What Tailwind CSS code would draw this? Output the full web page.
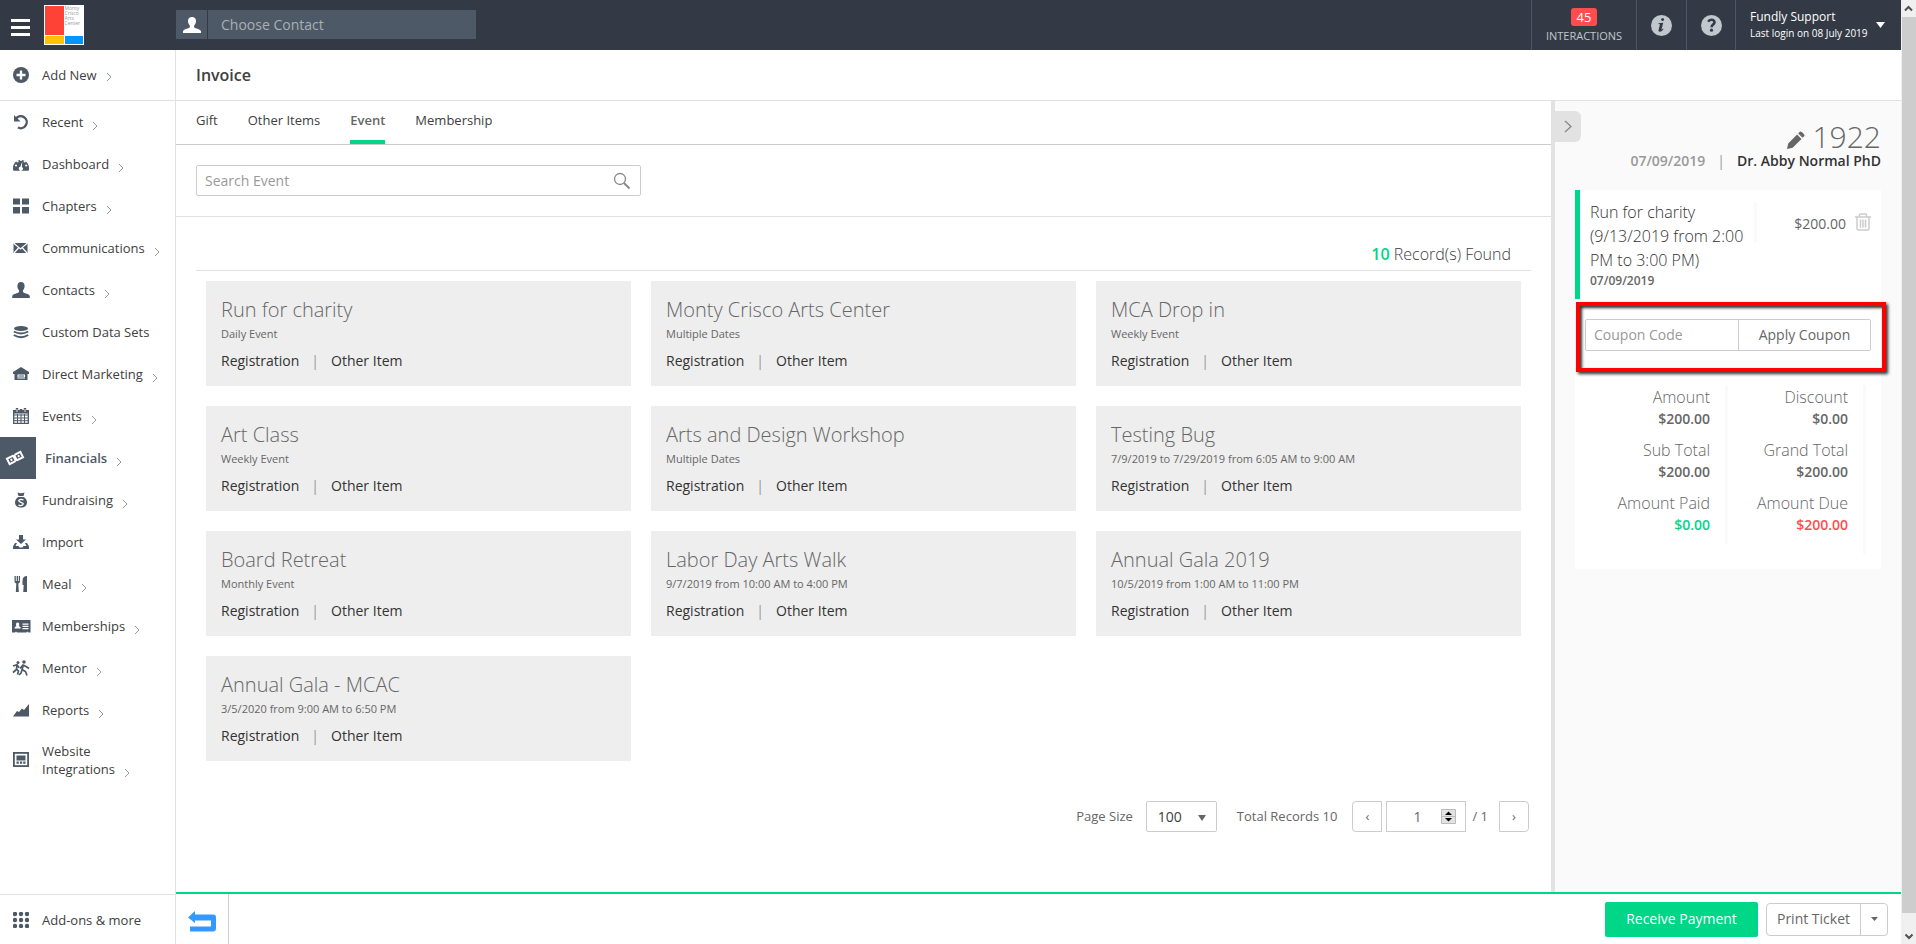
<!DOCTYPE html>
<html lang="en">
<head>
<meta charset="utf-8">
<meta name="viewport" content="width=device-width, initial-scale=1">
<title>Invoice</title>
<script src="https://cdn.jsdelivr.net/npm/@tailwindcss/browser@4"></script>
</head>
<body class="flex h-screen flex-col overflow-hidden bg-white font-['Open_Sans',sans-serif] text-sm text-[#666]">
<div class="flex min-h-0 flex-1">
<div class="flex min-w-0 flex-1 flex-col">

<header class="flex h-[50px] shrink-0 bg-[#343a45] text-white">
  <div class="flex w-44 shrink-0 items-center gap-[14px] pl-[11px]">
    <button aria-label="Menu" class="flex flex-col gap-1 pt-1"><span class="h-[3px] w-[19px] bg-white"></span><span class="h-[3px] w-[19px] bg-white"></span><span class="h-[3px] w-[19px] bg-white"></span></button>
    <a href="#" aria-label="Monty Crisco Arts Center" class="grid size-10 grid-cols-2 gap-px bg-white p-px">
      <span class="bg-[#ff4136]"></span>
      <span class="overflow-hidden text-[5px] leading-[5px] text-[#999]">Monty<br>Crisco<br>Arts<br>Center</span>
      <span class="bg-[#ffc107]"></span>
      <span class="bg-[#0095ff]"></span>
    </a>
  </div>
  <div class="flex h-[29px] w-[300px] gap-px self-center -mt-px">
    <span class="flex w-[31px] items-center justify-center bg-[#4d5966]"><svg class="size-[18px]" viewBox="0 0 18 18" fill="#fff"><path d="M9 1c2.500 0 4 1.600 4 4 0 1.600-.6 3.200-1.600 4.200-.5.600-.5 1.500 0 2.200.7.900 5.600 1.500 6.600 3.600V17H0v-2c1-2.100 5.900-2.700 6.600-3.600.5-.7.500-1.600 0-2.200C5.600 8.200 5 6.600 5 5c0-2.400 1.500-4 4-4z"/></svg></span>
    <input aria-label="Choose Contact" placeholder="Choose Contact" class="min-w-0 flex-1 bg-[#4d5966] px-[13px] text-sm outline-none placeholder:text-[#a9afb5]">
  </div>
  <div class="ml-auto flex">
    <a href="#" class="flex w-[105px] flex-col items-center border-l border-[#4d5663] pt-2 text-xs text-[#c2c7cd]"><span class="h-[18px] rounded-[3px] bg-[#ff4d4d] px-[6px] text-[13px] leading-[18px] text-white">45</span><span class="mt-px text-[11px] leading-[18px]">INTERACTIONS</span></a>
    <button aria-label="Information" class="flex w-[50px] items-center justify-center border-l border-[#4d5663]"><svg class="size-[21px]" viewBox="0 0 21 21"><circle cx="10.500" cy="10.500" r="10.500" fill="#c2c7cd"/><path fill="#343a45" d="M10.300 3.800a1.500 1.500 0 1 1 2.600 1.500 1.500 1.500 0 0 1-2.600-1.500zM7.500 8.300l4.700-.5-1.700 6.600c-.1.500.4.500 1.500-.8l.5.400c-1.200 1.900-2.300 2.700-3.500 2.700-1.300 0-1.700-.8-1.400-2l1.300-5c.1-.5-.3-.6-1.500-.7z"/></svg></button>
    <button aria-label="Help" class="flex w-[49px] items-center justify-center border-l border-[#4d5663]"><svg class="size-[21px]" viewBox="0 0 21 21"><circle cx="10.500" cy="10.500" r="10.500" fill="#c2c7cd"/><path fill="none" stroke="#343a45" stroke-width="2.600" d="M7.200 6.800c.6-1.300 1.700-2 3.300-2 1.800 0 3 .9 3 2.500 0 2.300-2.900 2.300-2.900 4.900"/><circle cx="10.500" cy="15.200" r="1.600" fill="#343a45"/></svg></button>
    <button class="flex w-[166px] items-center gap-2 border-l border-[#4d5663] pl-[14px] text-left"><span class="whitespace-nowrap"><span class="block text-xs leading-4">Fundly Support</span><span class="block text-[10px] leading-4">Last login on 08 July 2019</span></span><svg class="h-[6px] w-[9px]" viewBox="0 0 9 6" fill="#fff"><path d="M0 0h9L4.500 6z"/></svg></button>
  </div>
</header>

<div class="flex min-h-0 flex-1">
<nav class="flex w-44 shrink-0 flex-col border-r border-[#e2e2e2] text-[13px] leading-[18px] text-[#404040]">
  <a href="#" class="flex h-[51px] items-center border-b border-[#e2e2e2] pl-[13px]"><svg class="size-4 w-4" viewBox="0 0 16 16"><circle cx="8" cy="8" r="8" fill="#4d5966"/><path d="M8 3.500v9M3.500 8h9" stroke="#fff" stroke-width="2.400"/></svg><span class="ml-[13px]">Add New</span><svg class="ml-[9px] mt-1 h-2 w-[6px]" viewBox="0 0 6 8"><path d="M1 0l4 4-4 4" fill="none" stroke="#999"/></svg></a>
  <div id="menu" class="flex flex-1 flex-col"></div>
  <a href="#" class="flex h-[50px] items-center border-t border-[#e2e2e2] pl-[13px]"><svg class="size-4" viewBox="0 0 16 16" fill="#4d5966"><circle cx="2" cy="2" r="2.200"/><circle cx="8" cy="2" r="2.200"/><circle cx="14" cy="2" r="2.200"/><circle cx="2" cy="8" r="2.200"/><circle cx="8" cy="8" r="2.200"/><circle cx="14" cy="8" r="2.200"/><circle cx="2" cy="14" r="2.200"/><circle cx="8" cy="14" r="2.200"/><circle cx="14" cy="14" r="2.200"/></svg><span class="ml-[13px]">Add-ons &amp; more</span></a>
</nav>

<div class="flex min-w-0 flex-1 flex-col">
  <h1 class="flex h-[51px] shrink-0 items-center border-b border-[#e2e2e2] px-5 text-base font-semibold text-[#404040]">Invoice</h1>
  <div class="flex min-h-0 flex-1">
    <main class="flex min-w-0 flex-1 flex-col">
      <div class="flex h-11 shrink-0 gap-[30px] border-b border-[#ccc] px-5 text-[13px] text-[#404040]">
        <a href="#" class="flex h-[43px] items-center border-b-4 border-transparent">Gift</a>
        <a href="#" class="flex h-[43px] items-center border-b-4 border-transparent">Other Items</a>
        <a href="#" aria-current="page" class="flex h-[43px] items-center border-b-4 border-[#00d688] font-semibold text-[#666]">Event</a>
        <a href="#" class="flex h-[43px] items-center border-b-4 border-transparent">Membership</a>
      </div>
      <div class="flex h-[72px] shrink-0 border-b border-[#e2e2e2] px-5 pt-5">
        <label class="flex h-[31px] w-[445px] items-center rounded-xs border border-[#ccc] px-2"><input aria-label="Search Event" placeholder="Search Event" class="min-w-0 flex-1 text-sm outline-none placeholder:text-[#999]"><svg class="mr-px size-[18px]" viewBox="0 0 18 18" fill="none" stroke="#888"><circle cx="7" cy="7" r="5.500" stroke-width="1.300"/><path d="M11 11l5.500 5.500" stroke-width="2"/></svg></label>
      </div>
      <div class="flex flex-1 flex-col px-5">
        <p class="flex h-[54px] items-end justify-end border-b border-[#e2e2e2] pr-5 pb-[5px] text-base leading-[22px] font-light text-[#404040]"><span><b class="font-semibold text-[#00d688]">10</b> Record(s) Found</span></p>
        <div id="cards" class="grid grid-cols-3 gap-5 p-[10px]"></div>
        <div class="mt-[30px] flex items-center pr-[2px] text-[13px] justify-end">
          <label for="size">Page Size</label>
          <div class="relative ml-[13px] h-[31px] w-[71px]"><select id="size" class="size-full appearance-none rounded-xs border border-[#ccc] pl-[11px] text-sm leading-none text-[#404040]"><option>100</option></select><svg class="pointer-events-none absolute top-[14px] right-[11px] h-[6px] w-2" viewBox="0 0 8 6" fill="#666"><path d="M0 0h8L4 6z"/></svg></div>
          <span class="ml-5">Total Records 10</span>
          <button aria-label="Previous page" class="ml-[15px] h-[31px] w-[30px] rounded-l border border-[#ccc]">‹</button>
          <div class="relative ml-1 h-[31px] w-20"><input aria-label="Page" value="1" class="size-full border border-[#ccc] pr-[18px] text-center text-sm outline-none"><svg class="absolute top-2 right-[10px] h-[15px] w-[15px]" viewBox="0 0 15 15"><path fill="#e2e2e2" stroke="#bbb" d="M.5.500h14v14H.5zM.5 7.500h14"/><path fill="#000" d="M4 6l3.500-3.500L11 6zM4 9l3.500 3.500L11 9z"/></svg></div>
          <span class="ml-[6px]">/ 1</span>
          <button aria-label="Next page" class="ml-[11px] h-[31px] w-[30px] rounded-r border border-[#ccc]">›</button>
        </div>
      </div>
    </main>

    <aside class="relative w-[350px] shrink-0 border-l-4 border-[#e2e2e2] bg-[#fafafa] pr-5 pl-4">
      <button aria-label="Collapse panel" class="absolute top-[10px] left-0 flex h-[31px] w-[26px] items-center justify-center rounded-r-md bg-[#e2e2e2]"><svg class="h-[13px] w-2" viewBox="0 0 8 13"><path d="M1 1l6 5.500L1 12" fill="none" stroke="#888" stroke-width="1.300"/></svg></button>
      <div class="ml-1 flex h-[89px] flex-col items-end pt-4">
        <div class="flex items-center gap-2 text-[30px] leading-10 font-light"><button aria-label="Edit" class="mt-[5px]"><svg class="size-[18px]" viewBox="0 0 18 18" fill="#666"><path d="M0 18l1.200-5.600 8.900-8.900 4.400 4.400-8.900 8.900zM11.200 2.400l1.800-1.800c1-1 5.400 3.400 4.400 4.400l-1.800 1.800z"/></svg></button>1922</div>
        <div class="-mt-[6px] flex text-sm leading-5 font-semibold text-[#999]"><span>07/09/2019</span><span class="mx-3 font-normal">|</span><span class="text-[#333]">Dr. Abby Normal PhD</span></div>
      </div>
      <section class="ml-1 flex h-[109px] border-l-[5px] border-[#00d688] bg-white pt-[10px] pl-[10px]">
        <div class="w-[164px]"><p class="text-base leading-6 font-light text-[#333]">Run for charity<br>(9/13/2019 from 2:00<br>PM to 3:00 PM)</p><p class="text-xs leading-[17px] font-semibold">07/09/2019</p></div>
        <div class="mt-[3px] h-10 w-[3px] bg-[#fafafa]"></div>
        <div class="flex h-12 flex-1 items-center justify-end gap-[9px] pr-[10px] text-sm"><span>$200.00</span><button aria-label="Delete item" class="-mt-1"><svg class="h-[18px] w-4" viewBox="0 0 16 18" fill="none" stroke="#ccc" stroke-width="1.500"><path d="M0 4h16M2 4v11.500q0 1.500 1.500 1.500h9q1.500 0 1.500-1.500V4M4.500 4V2q0-1 1-1h5q1 0 1 1v2M5.500 6.500v8M8 6.500v8M10.500 6.500v8"/></svg></button></div>
      </section>
      <div class="relative ml-1 h-[71px]">
        <form class="h-[61px] bg-white px-[10px] pt-5"><div class="flex h-8 rounded-xs border border-[#ccc]"><input aria-label="Coupon Code" placeholder="Coupon Code" class="min-w-0 flex-1 border-r border-[#ccc] px-2 text-sm outline-none placeholder:text-[#999]"><button type="button" class="w-[131px] text-sm">Apply Coupon</button></div></form>
        <div class="pointer-events-none absolute top-[3px] -right-[5px] left-px h-[70px] border-4 border-[#f00] shadow-[2px_2px_3px_#333,inset_2px_2px_3px_#333]"></div>
      </div>
      <dl class="ml-1 flex h-[199px] bg-white pt-[15px] text-right">
        <div class="h-[159px] w-[153px] border-r-3 border-[#fafafa] pr-[15px]"><dt class="text-base leading-6 font-light">Amount</dt><dd class="text-sm leading-5 font-semibold">$200.00</dd><dt class="mt-[9px] text-base leading-6 font-light">Sub Total</dt><dd class="text-sm leading-5 font-semibold">$200.00</dd><dt class="mt-[9px] text-base leading-6 font-light">Amount Paid</dt><dd class="text-sm leading-5 font-semibold text-[#00d688]">$0.00</dd></div>
        <div class="h-[169px] w-[138px] border-r-3 border-[#fafafa] pr-[15px]"><dt class="text-base leading-6 font-light">Discount</dt><dd class="text-sm leading-5 font-semibold">$0.00</dd><dt class="mt-[9px] text-base leading-6 font-light">Grand Total</dt><dd class="text-sm leading-5 font-semibold">$200.00</dd><dt class="mt-[9px] text-base leading-6 font-light">Amount Due</dt><dd class="text-sm leading-5 font-semibold text-[#ff4d4d]">$200.00</dd></div>
      </dl>
    </aside>
  </div>
  <footer class="flex h-[52px] shrink-0 items-center border-t-2 border-[#00d688] pr-[13px]">
    <button aria-label="Back" class="flex h-full w-[53px] items-center justify-center border-r border-[#ccc] pt-1"><svg class="h-[21px] w-7" viewBox="0 0 28 21" fill="#3399ff"><path d="M0 6.500L7 0v3.500h18q3 0 3 3v11q0 3-3 3H2v-5h21v-6H7V12z"/></svg></button>
    <button class="ml-auto h-[35px] w-[153px] rounded-xs bg-[#00d688] text-sm text-white">Receive Payment</button>
    <div class="ml-2 flex h-[33px] rounded border border-[#ccc]"><button class="w-[94px] border-r border-[#ccc] text-sm">Print Ticket</button><button aria-label="More print options" class="flex w-[26px] items-center justify-center"><svg class="h-1 w-[7px]" viewBox="0 0 7 4" fill="#666"><path d="M0 0h7L3.500 4z"/></svg></button></div>
  </footer>
</div>
</div>
</div>

<div aria-hidden="true" class="flex w-[15px] shrink-0 flex-col bg-[#f0f0f0]">
  <svg class="h-[17px] w-[15px]" viewBox="0 0 15 17"><path d="M4 10.500L7.500 7l3.500 3.500" fill="none" stroke="#505050" stroke-width="2"/></svg>
  <div class="ml-px flex-1 bg-[#cdcdcd]"></div>
  <svg class="h-[31px] w-[15px]" viewBox="0 0 15 31"><path d="M4.500 21.500L8 25l3.500-3.500" fill="none" stroke="#505050" stroke-width="2"/></svg>
</div>
</div>

<script>
const icons = {
  recent: '<path d="M3 4.500A6 6 0 1 1 5 13.500" fill="none" stroke="#4d5966" stroke-width="2.400"/><path d="M1 1v6.500h6.500z"/>',
  dashboard: '<path d="M0 14a8.200 8.200 0 1 1 16 0q-.3.800-1 .8H1q-.7 0-1-.8z"/><g fill="#fff"><circle cx="3" cy="9.500" r="1.100"/><circle cx="4.500" cy="5.500" r="1.100"/><circle cx="8" cy="4" r="1.100"/><circle cx="11.700" cy="5.500" r="1.100"/><circle cx="13.200" cy="9.500" r="1.100"/><path d="M9.300 5.500l-.4 5.500a2 2 0 1 1-1.600-.2z"/></g>',
  chapters: '<path d="M0 .5h7v6H0zM9 .5h7v6H9zM0 9h7v6.500H0zM9 9h7v6.500H9z"/>',
  mail: '<path d="M.5 3h14v10H.5z"/><path d="M.5 3l7 6 7-6M1 13l4.500-5M14 13L9.500 8" fill="none" stroke="#fff" stroke-width="1.200"/>',
  person: '<path d="M8 0c2.200 0 3.600 1.500 3.600 4 0 1.600-.5 3-1.400 4-.4.600-.4 1.600 0 2.200.8 1 5.800 1.500 6.600 3.700V16H-.8v-2.100c.8-2.200 5.800-2.700 6.600-3.700.4-.6.400-1.600 0-2.200-.9-1-1.400-2.400-1.400-4C4.400 1.500 5.800 0 8 0z"/>',
  layers: '<ellipse cx="8" cy="4.500" rx="7" ry="2.500"/><path d="M.8 7.500Q8 11.500 15.200 7.500M.8 11Q8 15.500 15.200 11" fill="none" stroke="#4d5966" stroke-width="2"/>',
  house: '<path d="M8 1l8 5v2h-1.500v6h-13V8H0V6z"/><path d="M4.500 8.500h7.500V13H4.500z" fill="#fff"/><path d="M5.500 10h5.500M4.500 12h7.500" stroke="#4d5966"/>',
  calendar: '<path d="M.7 3h14.600v12.300H.7z" fill="none" stroke="#4d5966" stroke-width="1.300"/><path d="M.7 7h14.600M.7 10h14.600M.7 12.700h14.600M4.500 6v9M8 6v9M11.500 6v9" stroke="#4d5966"/><path d="M0 2h16v3.500H0z"/><path d="M4 0v4M12 0v4M8 1v3" stroke="#4d5966" stroke-width="2.400"/><path d="M4 1v3M12 1v3" stroke="#fff" stroke-width=".8"/>',
  cash: '<g transform="rotate(-27 8 8)"><path d="M-.5 4h8l1 .8 1-.8h7v8h-8l-1-.8-1 .8h-7z" fill="#fff"/><path d="M1.500 6h5v4h-5zM9.500 6h5v4h-5z" fill="#4d5966"/><path d="M3 8h2M11 8h2" stroke="#fff" stroke-width="2"/></g>',
  bag: '<path d="M4.500.5q3.500 1.500 7 0L10.500 4h-5zM5.500 5h5c2.500 1.200 3.500 3.500 3.500 5.500 0 3-2.500 5-6 5s-6-2-6-5C2 8.500 3 6.200 5.500 5z"/><path d="M10.500 8Q8 6.800 6.300 8t1.700 2.300 1.700 2.500-4.200.3" fill="none" stroke="#fff" stroke-width="1.300"/>',
  import: '<path d="M6 1h4v4.500h3L8 10 3 5.500h3z"/><path d="M2 9L0 12.500V15h16v-2.500L14 9h-2l1.500 3h-3L9.500 13.500h-3L5.500 12h-3L4 9z"/>',
  meal: '<path d="M1.500 0v5q0 2 1.800 2.500L2.800 16h3L5.300 7.500Q7 7 7 5V0H5.900v5h-.8V0H3.700v5H2.800V0zM14 0q-4.500 0-4.500 5v4h1.200l-.5 7H14z"/>',
  idcard: '<path d="M-1 2h18.500v12.500h-2l-1-1-1 1H4l-1-1-1 1h-3z"/><path d="M1.500 10.500q0-2 1.800-2.300-1-3.700 1.300-3.700t1.400 3.700q1.800.3 1.800 2.300zM9.500 5.500h6v1.200h-6zM9.500 7.800h6V9h-6zM9.500 10h6v1.200h-6z" fill="#fff"/>',
  mentor: '<circle cx="5" cy="2.500" r="1.500"/><circle cx="11" cy="2" r="1.800"/><path d="M0 6l4-1.200 2 3M4 5L3.500 9l2 2-1 3.500M3.500 9.500L0 12.500M7 8.500l3-3.500 3 1.500 3 2M10.500 5L9 9.500l3.500 2 1.500 4M9 10l-1 3-2 2" fill="none" stroke="#4d5966" stroke-width="1.700"/>',
  reports: '<path d="M0 14.500L4 9l2 1 3-3.500 2 1.500 5-6v12.500z"/>',
  website: '<path d="M0 0h16v15H0z"/><path d="M1.800 1.800h12.400v11.400H1.800z" fill="#fff"/><path d="M3.500 3.500h9v5h-9zM3.500 9.500h2.300v2.300H3.500zM6.900 9.500h2.300v2.300H6.900zM10.200 9.500h2.300v2.300h-2.300z"/>'
};
const items = [['Recent','recent',1],['Dashboard','dashboard',1],['Chapters','chapters',1],['Communications','mail',1],['Contacts','person',1],['Custom Data Sets','layers',0],['Direct Marketing','house',1],['Events','calendar',1],['Financials','cash',1],['Fundraising','bag',1],['Import','import',0],['Meal','meal',1],['Memberships','idcard',1],['Mentor','mentor',1],['Reports','reports',1],['Website<br>Integrations','website',1]];
const arrow = '<svg class="ml-[9px] mt-1 inline-block h-2 w-[6px]" viewBox="0 0 6 8"><path d="M1 0l4 4-4 4" fill="none" stroke="#999"/></svg>';
document.getElementById('menu').innerHTML = items.map(([name, icon, more]) => {
  const svg = '<svg class="size-4 shrink-0 overflow-visible" viewBox="0 0 16 16" fill="#4d5966">' + icons[icon] + '</svg>';
  const text = name + (more ? arrow : '');
  if (icon === 'cash') return '<a href="#" aria-current="page" class="flex h-[42px] items-center font-semibold text-[#4d5966]"><span class="flex h-full w-9 items-center bg-[#4d5966] pl-[7px]">' + svg + '</span><span class="ml-[9px]">' + text + '</span></a>';
  if (icon === 'website') return '<a href="#" class="flex h-[58px] items-center pl-[13px]">' + svg + '<span class="ml-[13px]">' + text + '</span></a>';
  return '<a href="#" class="flex h-[42px] items-center pl-[13px]">' + svg + '<span class="ml-[13px] whitespace-nowrap">' + text + '</span></a>';
}).join('');

const events = [['Run for charity','Daily Event'],['Monty Crisco Arts Center','Multiple Dates'],['MCA Drop in','Weekly Event'],['Art Class','Weekly Event'],['Arts and Design Workshop','Multiple Dates'],['Testing Bug','7/9/2019 to 7/29/2019 from 6:05 AM to 9:00 AM'],['Board Retreat','Monthly Event'],['Labor Day Arts Walk','9/7/2019 from 10:00 AM to 4:00 PM'],['Annual Gala 2019','10/5/2019 from 1:00 AM to 11:00 PM'],['Annual Gala - MCAC','3/5/2020 from 9:00 AM to 6:50 PM']];
document.getElementById('cards').innerHTML = events.map(([title, when]) =>
  '<article class="h-[105px] bg-[#eee] px-[15px] pt-[15px]"><h2 class="text-xl leading-7 font-light">' + title + '</h2><p class="text-[11px] leading-5">' + when + '</p><p class="mt-[7px] text-sm leading-5 text-[#333]"><a href="#">Registration</a><span class="mx-3 text-[#999]">|</span><a href="#">Other Item</a></p></article>').join('');
</script>
</body>
</html>
